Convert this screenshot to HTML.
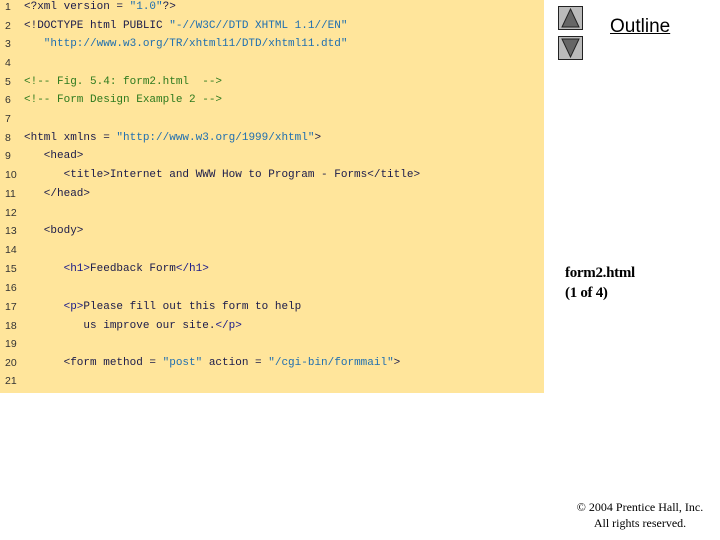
<!DOCTYPE html>
<html><head><style>
body{margin:0;width:720px;height:540px;background:#fff;position:relative;overflow:hidden}
#p{position:absolute;left:0;top:0;width:544px;height:393px;background:#ffe59b}
.l{position:absolute;left:0;height:18px;font:11px/18px "Liberation Mono",monospace;color:#1a1a4a;white-space:pre}
.n{position:absolute;left:5px;color:#333;font:10.5px/18px "Liberation Sans",sans-serif}
.c{position:absolute;left:24px}
.s{color:#1f6fb0}.g{color:#2e7a1e}.t{color:#1a1a8a}
.box{position:absolute;left:558px;width:23px;height:22px;background:#bbb;border:1px solid #222}
.ser{font-family:"Liberation Serif",serif}
</style></head><body>
<div id="p">
<div class="l" style="top:-2px"><span class="n">1</span><span class="c">&lt;?xml version = <span class="s">"1.0"</span>?&gt;</span></div>
<div class="l" style="top:17px"><span class="n">2</span><span class="c">&lt;!DOCTYPE html PUBLIC <span class="s">"-//W3C//DTD XHTML 1.1//EN"</span></span></div>
<div class="l" style="top:35px"><span class="n">3</span><span class="c"><span class="s">   "http://www.w3.org/TR/xhtml11/DTD/xhtml11.dtd"</span></span></div>
<div class="l" style="top:54px"><span class="n">4</span></div>
<div class="l" style="top:73px"><span class="n">5</span><span class="c g">&lt;!-- Fig. 5.4: form2.html  --&gt;</span></div>
<div class="l" style="top:91px"><span class="n">6</span><span class="c g">&lt;!-- Form Design Example 2 --&gt;</span></div>
<div class="l" style="top:110px"><span class="n">7</span></div>
<div class="l" style="top:129px"><span class="n">8</span><span class="c">&lt;html xmlns = <span class="s">"http://www.w3.org/1999/xhtml"</span>&gt;</span></div>
<div class="l" style="top:147px"><span class="n">9</span><span class="c">   &lt;head&gt;</span></div>
<div class="l" style="top:166px"><span class="n">10</span><span class="c">      &lt;title&gt;Internet and WWW How to Program - Forms&lt;/title&gt;</span></div>
<div class="l" style="top:185px"><span class="n">11</span><span class="c">   &lt;/head&gt;</span></div>
<div class="l" style="top:204px"><span class="n">12</span></div>
<div class="l" style="top:222px"><span class="n">13</span><span class="c">   &lt;body&gt;</span></div>
<div class="l" style="top:241px"><span class="n">14</span></div>
<div class="l" style="top:260px"><span class="n">15</span><span class="c">      <span class="t">&lt;h1&gt;</span>Feedback Form<span class="t">&lt;/h1&gt;</span></span></div>
<div class="l" style="top:279px"><span class="n">16</span></div>
<div class="l" style="top:298px"><span class="n">17</span><span class="c">      <span class="t">&lt;p&gt;</span>Please fill out this form to help</span></div>
<div class="l" style="top:317px"><span class="n">18</span><span class="c">         us improve our site.<span class="t">&lt;/p&gt;</span></span></div>
<div class="l" style="top:335px"><span class="n">19</span></div>
<div class="l" style="top:354px"><span class="n">20</span><span class="c">      &lt;form method = <span class="s">"post"</span> action = <span class="s">"/cgi-bin/formmail"</span>&gt;</span></div>
<div class="l" style="top:372px"><span class="n">21</span></div>
</div>
<div class="box" style="top:6px"><svg width="23" height="22"><polygon points="11.5,2 20,20 3,20" fill="#666" stroke="#222"/></svg></div>
<div class="box" style="top:36px"><svg width="23" height="22"><polygon points="3,2 20,2 11.5,20" fill="#666" stroke="#222"/></svg></div>
<div style="position:absolute;left:610px;top:16px;font:19px 'Liberation Sans',sans-serif;text-decoration:underline;color:#000">Outline</div>
<div class="ser" style="position:absolute;left:565px;top:263px;font-size:15px;line-height:20px;font-weight:bold;letter-spacing:-0.3px">form2.html<br>(1 of 4)</div>
<div class="ser" style="position:absolute;left:560px;top:500px;width:160px;text-align:center;font-size:12px;line-height:15.5px">© 2004 Prentice Hall, Inc.<br>All rights reserved.</div>
</body></html>
